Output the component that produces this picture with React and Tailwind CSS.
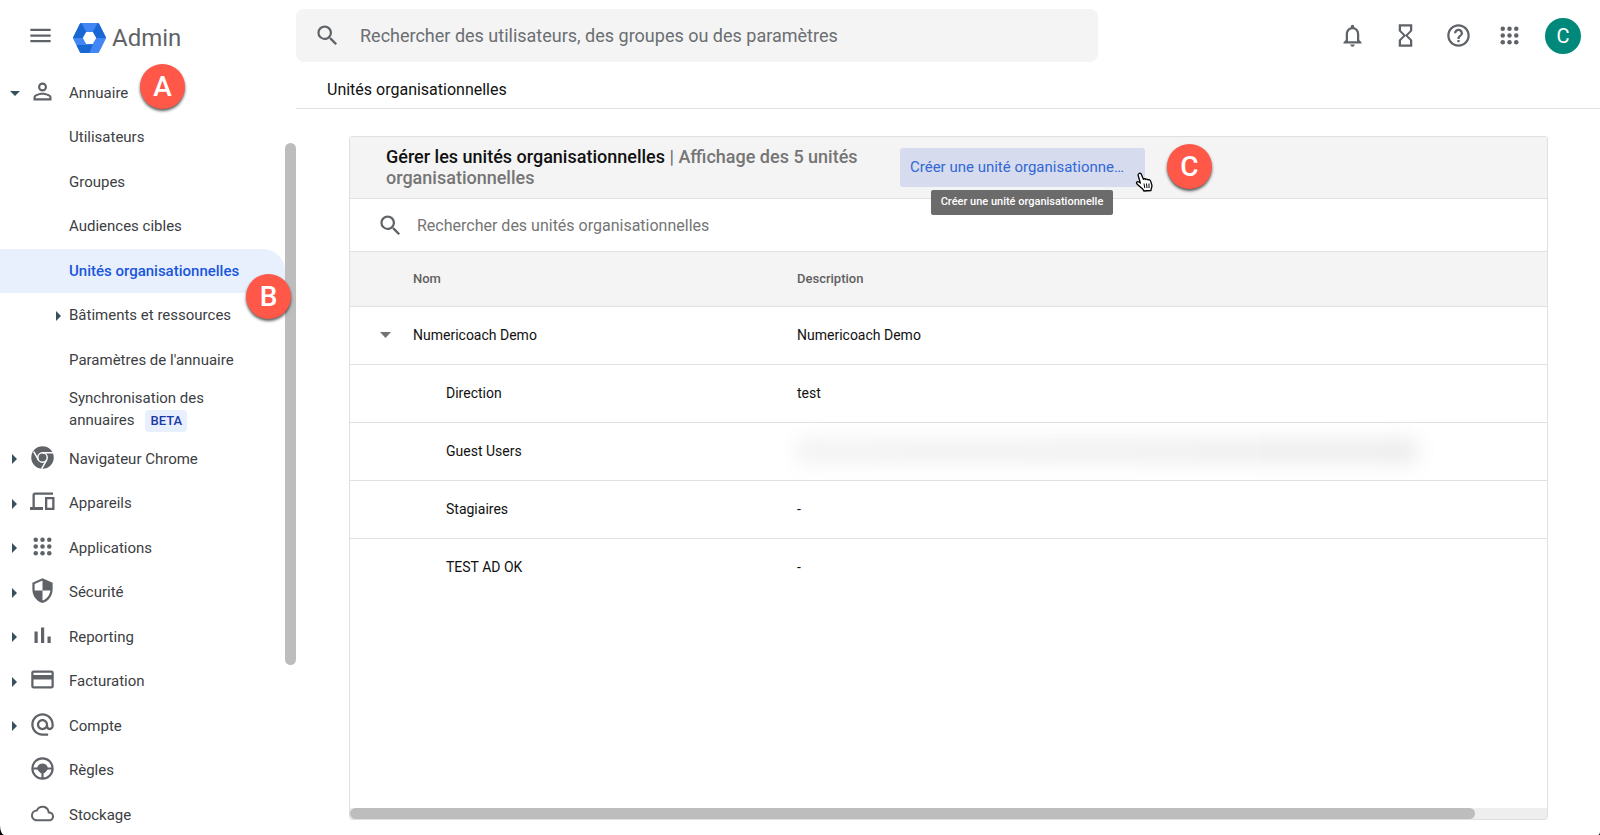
import { useState } from 'react'
import clsx from 'clsx'
import {
  MdAlternateEmail,
  MdCloudQueue,
  MdCreditCard,
  MdHelpOutline,
  MdHourglassEmpty,
  MdMenu,
  MdNotificationsNone,
  MdPersonOutline,
  MdSearch,
  MdSecurity,
} from 'react-icons/md'

const AppsIcon = ({ className }) => (
  <svg viewBox="0 0 24 24" fill="currentColor" className={className}>
    {[6, 12, 18].map((y) =>
      [6, 12, 18].map((x) => <circle key={`${x}-${y}`} cx={x} cy={y} r="2" />)
    )}
  </svg>
)

const ChromeIcon = ({ className }) => (
  <svg viewBox="0 0 24 24" className={className}>
    <circle cx="12" cy="12" r="10" fill="currentColor" />
    <g fill="none" stroke="white" strokeWidth="1.3">
      <circle cx="12" cy="12" r="4.2" />
      <path d="M12 7.8h9.5M8.4 14.1L4.2 6.8M15.7 14.1L11.2 22.2" />
    </g>
  </svg>
)

const DevicesIcon = ({ className }) => (
  <svg viewBox="0 0 27 27" className={className}>
    <path
      d="M24 4.5H6a2.5 2.5 0 0 0-2.5 2.5v12H1v3h13v-3H5.800V6.700H24zM16 9h9.500v13H16zm2.300 2.300v8.400h4.900v-8.400z"
      fill="currentColor"
      fillRule="evenodd"
    />
  </svg>
)

const ReportIcon = ({ className }) => (
  <svg viewBox="0 0 27 27" fill="currentColor" className={className}>
    <path d="M5.5 9.500h3.200V21H5.500zM12 5.500h3.200V21H12zM18.500 14.500h3.200V21h-3.200z" />
  </svg>
)

const WheelIcon = ({ className }) => (
  <svg viewBox="0 0 24 24" className={className}>
    <g fill="none" stroke="currentColor" strokeWidth="1.9">
      <circle cx="12" cy="12" r="9" />
      <path d="M3 12h18M12 12v9" />
    </g>
    <path
      d="M8 9.5C9 8.3 10.5 7.600 12 7.600s3 .7 4 1.900l1 2.500-1.200 2-2.300 2.300h-3L8.200 14 7 12z"
      fill="currentColor"
    />
  </svg>
)

const AdminLogo = () => (
  <svg viewBox="0 0 33 30" className="h-[30px] w-[33px]">
    <path d="M8.5 0h16a2 2 0 0 1 1.700 1L32.700 14a2 2 0 0 1 0 2l-6.500 13a2 2 0 0 1-1.700 1h-16a2 2 0 0 1-1.700-1L.3 16a2 2 0 0 1 0-2L6.800 1a2 2 0 0 1 1.700-1z" fill="#4285f4" />
    <path d="M6.8 1A2 2 0 0 1 8.500 0L13.200 9 9.800 15H0a2 2 0 0 1 .3-1z" fill="#1967d2" />
    <path d="M24.5 0a2 2 0 0 1 1.700 1L32.700 14a2 2 0 0 1 .2 1H23.200l-3.400-6z" fill="#1967d2" />
    <path d="M3.5 22h9.700l6.600-1L16.500 30h-8a2 2 0 0 1-1.700-1z" fill="#1967d2" />
    <path d="M13.2 9h6.600l3.400 6-3.400 6h-6.600l-3.400-6z" fill="white" />
  </svg>
)

const HandCursor = ({ className }) => (
  <svg viewBox="0 0 18 20" className={className}>
    <path
      d="M4 1.5c1-.6 2 0 2.400 1l2 4.800c.6-.8 1.800-.7 2.300.2.800-.7 1.900-.5 2.300.4 1-.5 2.200 0 2.600 1.200l1.200 3.600c.4 1.500 0 2.700-.6 4L16 18.500 8.800 19l-.9-1.700-4.800-4.300c-1.400-1.300-2-2.200-1.400-2.900.8-.9 2.100-.4 3.700 1L3.200 3.500c-.3-.9 0-1.600.8-2z"
      fill="white"
      stroke="black"
      strokeWidth="1.3"
      strokeLinejoin="round"
    />
    <path d="M9 11.5l.8 4.500M11.500 11.500l.5 4.500M14 11.500v4.500" stroke="black" strokeWidth="1" />
  </svg>
)

const Marker = ({ letter, className }) => (
  <span
    className={clsx(
      'absolute z-20 flex size-[45px] items-center justify-center rounded-full bg-[#ff5748] text-[28px] font-medium leading-none text-white shadow-[0_2px_3px_rgba(0,0,0,0.65)]',
      className
    )}
  >
    {letter}
  </span>
)

const directoryLinks = [
  { label: 'Utilisateurs' },
  { label: 'Groupes' },
  { label: 'Audiences cibles' },
  { label: 'Unités organisationnelles', active: true },
  { label: 'Bâtiments et ressources', expandable: true },
  { label: "Paramètres de l'annuaire" },
]

const sections = [
  { label: 'Navigateur Chrome', Icon: ChromeIcon, expandable: true },
  { label: 'Appareils', Icon: DevicesIcon, expandable: true },
  { label: 'Applications', Icon: AppsIcon, expandable: true },
  { label: 'Sécurité', Icon: MdSecurity, expandable: true },
  { label: 'Reporting', Icon: ReportIcon, expandable: true },
  { label: 'Facturation', Icon: MdCreditCard, expandable: true },
  { label: 'Compte', Icon: MdAlternateEmail, expandable: true },
  { label: 'Règles', Icon: WheelIcon },
  { label: 'Stockage', Icon: MdCloudQueue, small: true },
]

const units = [
  { name: 'Numericoach Demo', description: 'Numericoach Demo', root: true },
  { name: 'Direction', description: 'test' },
  { name: 'Guest Users', hidden: true },
  { name: 'Stagiaires', description: '-' },
  { name: 'TEST AD OK', description: '-' },
]

const Arrow = () => (
  <svg viewBox="0 0 5 10" className="h-[10px] w-[5px] shrink-0 fill-[#37505c]">
    <path d="M0 0l5 5-5 5z" />
  </svg>
)

const Sidebar = () => (
  <aside className="flex w-[296px] shrink-0">
    <nav className="min-w-0 flex-1">
      <ul>
        <li>
          <a href="#annuaire" className="relative flex h-11 items-center">
            <span className="flex w-[29px] justify-center">
              <svg viewBox="0 0 10 5" className="h-[5px] w-[10px] fill-[#37505c]">
                <path d="M0 0h10L5 5z" />
              </svg>
            </span>
            <MdPersonOutline className="mb-1 mr-[13px] size-[27px] text-[#5f6368]" />
            Annuaire
            <Marker letter="A" className="-top-[7px] left-[140px]" />
          </a>
          <ul>
            {directoryLinks.map(({ label, active, expandable }) => (
              <li key={label} className="odd:h-[45px] even:h-11">
                <a
                  href="#unites"
                  className={clsx(
                    'relative flex h-full items-center',
                    active && 'rounded-tr-[22px] bg-[#e8f0fe] font-medium text-[#1a56db]'
                  )}
                >
                  <span className="flex w-[69px] justify-end pr-2">
                    {expandable && <Arrow />}
                  </span>
                  {label}
                  {active && <Marker letter="B" className="left-[246px] top-[25px]" />}
                </a>
              </li>
            ))}
            <li>
              <a href="#sync" className="block h-[55px] pl-[69px] pt-[5px] leading-[22px]">
                Synchronisation des
                <br />
                annuaires
                <span className="ml-[11px] inline-block rounded-[4px] bg-[#e8f0fe] px-[5px] text-[13px] font-medium text-[#1a3aa8]">
                  BETA
                </span>
              </a>
            </li>
          </ul>
        </li>
        {sections.map(({ label, Icon, expandable, small }) => (
          <li key={label} className="odd:h-[45px] even:h-11">
            <a href="#section" className="flex h-full items-center">
              <span className="flex w-[29px] justify-center">
                {expandable && <Arrow />}
              </span>
              <span className="mb-1 mr-[13px] flex w-[27px] justify-center text-[#5f6368]">
                <Icon className={small ? 'size-[23px]' : 'size-[27px]'} />
              </span>
              {label}
            </a>
          </li>
        ))}
      </ul>
    </nav>
    <div className="w-[11px] pt-[72px]">
      <div className="h-[522px] rounded-full bg-[#bdbdbd]" />
    </div>
  </aside>
)

const UnitsTable = () => (
  <table className="w-full table-fixed text-left text-sm">
    <thead>
      <tr className="h-[54px] border-b border-[#e0e0e0] bg-[#f4f4f4] text-[13px] text-[#616161]">
        <th className="w-[447px] pl-[63px] pt-0.5 font-medium">Nom</th>
        <th className="pt-0.5 font-medium">Description</th>
      </tr>
    </thead>
    <tbody className="text-[#111111]">
      {units.map(({ name, description, root, hidden }) => (
        <tr key={name} className="h-[58px] border-b border-[#e0e0e0] last:border-0">
          <td>
            <div className="flex items-center">
              <span className={clsx('flex', root ? 'w-[63px] pl-[30px]' : 'w-24')}>
                {root && (
                  <svg viewBox="0 0 11 6" className="h-[6px] w-[11px] fill-[#757575]">
                    <path d="M0 0h11L5.5 6z" />
                  </svg>
                )}
              </span>
              {name}
            </div>
          </td>
          <td>
            {hidden ? (
              <div className="h-6 w-[620px] bg-gradient-to-r from-[#f2f2f2] via-[#f0f0f0] to-[#ebebeb] blur-[10px]" />
            ) : (
              description
            )}
          </td>
        </tr>
      ))}
    </tbody>
  </table>
)

const App = () => {
  const [query, setQuery] = useState('')
  const [unitQuery, setUnitQuery] = useState('')

  return (
    <div className="h-screen overflow-hidden bg-black">
      <div className="flex h-full flex-col rounded-bl-[4px_10px] rounded-br-[2px_4px] bg-white font-['Roboto',sans-serif] text-[15px] text-[#3c4043]">
        <header className="flex h-[71px] shrink-0 items-center">
          <div className="flex w-[296px] shrink-0 items-center pl-[27px]">
            <button type="button" aria-label="Menu">
              <MdMenu className="size-[27px] text-[#5f6368]" />
            </button>
            <a href="#admin" className="ml-[19px] flex items-center gap-[6px] pt-1">
              <AdminLogo />
              <span className="text-2xl leading-[30px] text-[#5f6368]">Admin</span>
            </a>
          </div>
          <label className="flex h-[53px] w-[802px] items-center rounded-lg bg-[#f4f4f4] pl-[18px]">
            <MdSearch className="size-[27px] text-[#5f6368]" />
            <input
              type="text"
              aria-label="Rechercher"
              value={query}
              onChange={(e) => setQuery(e.target.value)}
              placeholder="Rechercher des utilisateurs, des groupes ou des paramètres"
              className="ml-[19px] flex-1 text-lg outline-none placeholder:text-[#6b6e72]"
            />
          </label>
          <div className="ml-auto flex items-center pr-[19px] text-[#5f6368]">
            <button type="button" aria-label="Notifications" className="mr-[26px]">
              <MdNotificationsNone className="size-[27px]" />
            </button>
            <button type="button" aria-label="Tâches" className="mr-[26px]">
              <MdHourglassEmpty className="size-[27px]" />
            </button>
            <button type="button" aria-label="Aide" className="mr-6">
              <MdHelpOutline className="size-[27px]" />
            </button>
            <button type="button" aria-label="Applications" className="mr-[22px]">
              <AppsIcon className="size-[27px]" />
            </button>
            <button
              type="button"
              className="size-9 rounded-full bg-[#00897b] text-xl text-white"
            >
              C
            </button>
          </div>
        </header>

        <div className="flex min-h-0 flex-1">
          <Sidebar />
          <main className="flex min-w-0 flex-1 flex-col">
            <h1 className="h-[38px] shrink-0 border-b border-[#e0e0e0] pl-[31px] text-base leading-[37px] text-[#111111]">
              Unités organisationnelles
            </h1>
            <section className="mb-[15px] ml-[53px] mr-[52px] mt-[27px] flex flex-1 flex-col rounded-[3px] border border-[#e0e0e0]">
              <div className="relative flex h-[62px] shrink-0 items-center border-b border-[#e0e0e0] bg-[#f4f4f4] pl-9">
                <h2 className="w-[514px] pb-0.5 pr-5 text-lg font-medium leading-[21px] text-[#757575]">
                  <span className="text-[#111111]">Gérer les unités organisationnelles</span> |
                  Affichage des 5 unités organisationnelles
                </h2>
                <div className="relative">
                  <button
                    type="button"
                    className="block h-[39px] w-[245px] truncate rounded-[3px] bg-[#d6dcee] pl-[10px] pr-[18px] text-left text-[15px] leading-[39px] text-[#3367d6]"
                  >
                    Créer une unité organisationnelle
                  </button>
                  <span className="absolute left-[31px] top-[42px] z-10 flex h-[25px] w-[182px] items-center justify-center whitespace-nowrap rounded-[2px] bg-[#6b6b6b] text-[11px] font-medium text-white">
                    Créer une unité organisationnelle
                  </span>
                  <HandCursor className="absolute left-[235px] top-6 z-10 h-5 w-[18px]" />
                  <Marker letter="C" className="-top-1 left-[267px]" />
                </div>
              </div>
              <label className="flex h-[53px] shrink-0 items-center border-b border-[#e0e0e0] pl-[27px]">
                <MdSearch className="size-[27px] text-[#5f6368]" />
                <input
                  type="text"
                  aria-label="Rechercher des unités"
                  value={unitQuery}
                  onChange={(e) => setUnitQuery(e.target.value)}
                  placeholder="Rechercher des unités organisationnelles"
                  className="ml-[13px] flex-1 pt-0.5 text-base outline-none placeholder:text-[#757575]"
                />
              </label>
              <div className="flex-1">
                <UnitsTable />
              </div>
              <div className="h-[11px] bg-[#eeeeee]">
                <div className="h-full w-[94%] rounded-full bg-[#bdbdbd]" />
              </div>
            </section>
          </main>
        </div>
      </div>
    </div>
  )
}

export default App
